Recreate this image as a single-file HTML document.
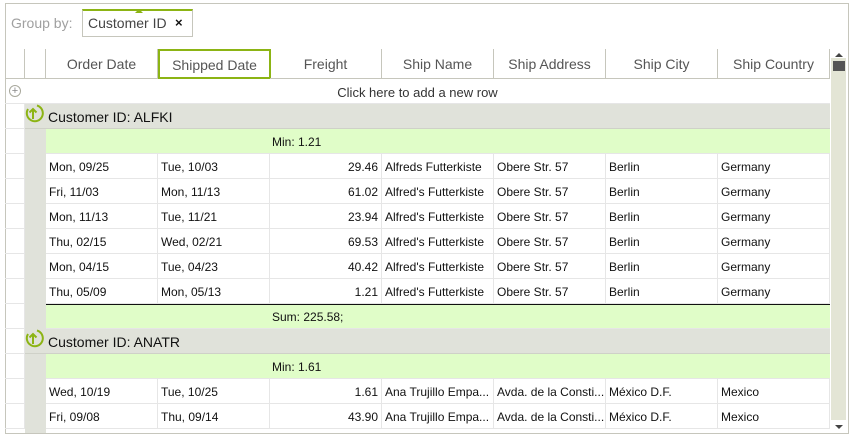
<!DOCTYPE html>
<html><head><meta charset="utf-8"><style>
*{margin:0;padding:0;box-sizing:border-box}
body{width:853px;height:439px;background:#fff;font-family:"Liberation Sans",sans-serif;position:relative;overflow:hidden;color:#111}
.a{position:absolute}
.outer{left:5px;top:3px;width:844px;height:431px;border:1px solid #c6c6bc}
.hd{top:49px;height:30px;border-bottom:1px solid #c6c6bc;border-right:1px solid #c6c6bc;font-size:14px;color:#555;text-align:center;line-height:31px}
.row{left:25px;width:805px;height:25px}
.c{position:absolute;top:0;height:25px;border-right:1px solid #e6e6e6;border-bottom:1px solid #e6e6e6;font-size:12px;line-height:26px;padding:0 3px;white-space:nowrap;overflow:hidden;background:#fff}
.ind{left:5px;width:20px;height:25px;border-bottom:1px solid #e6e6e6;border-right:1px solid #e6e6e6}
.grp{background:#e0e2da;font-size:14px;line-height:27px;padding-left:23px;border-bottom:1px solid #cfd1c8}
.agg{background-color:#e0fdc8;font-size:12px;line-height:26px;border-bottom:1px solid #e6e6e6;height:25px}
</style></head><body>
<div class="a outer"></div>
<div class="a" style="left:11px;top:15px;font-size:14px;color:#a0a0a0">Group by:</div>
<div class="a" style="left:82px;top:9px;width:111px;height:28px;border:1px solid #c6c6bc;border-top:2px solid #8cb414;font-size:14px;color:#444;padding:4px 0 0 5px">Customer ID<span style="position:absolute;left:92px;top:4px;font-size:13px;color:#111;font-weight:bold">×</span><span style="position:absolute;left:52px;top:-2px;width:0;height:0;border-left:4px solid transparent;border-right:4px solid transparent;border-bottom:4px solid #8cb414"></span></div>

<div class="a hd" style="left:5px;width:20px"></div>
<div class="a hd" style="left:25px;width:21px"></div>
<div class="a hd" style="left:46px;width:112px">Order Date</div>
<div class="a hd" style="left:158px;width:113px;border:2px solid #8cb414;line-height:29px">Shipped Date</div>
<div class="a hd" style="left:270px;width:112px">Freight</div>
<div class="a hd" style="left:382px;width:112px">Ship Name</div>
<div class="a hd" style="left:494px;width:112px">Ship Address</div>
<div class="a hd" style="left:606px;width:112px">Ship City</div>
<div class="a hd" style="left:718px;width:112px">Ship Country</div>

<div class="a" style="left:5px;top:79px;width:825px;height:25px;border-bottom:1px solid #e6e6e6;font-size:13px;color:#333;text-align:center;line-height:27px">Click here to add a new row</div>
<div class="a" style="left:9px;top:85px;width:12px;height:12px;border:1px solid #a8a89c;border-radius:50%;font-size:11px;line-height:10px;text-align:center;color:#888">+</div>

<div class="a" style="left:831px;top:58px;width:15px;height:362px;background:#e3e5d5"></div>
<div class="a" style="left:833px;top:61px;width:12px;height:10px;background:#555"></div>
<div class="a" style="left:835px;top:53px;border-left:4px solid transparent;border-right:4px solid transparent;border-bottom:4px solid #444"></div>
<div class="a" style="left:835px;top:425px;border-left:4px solid transparent;border-right:4px solid transparent;border-top:4px solid #444"></div>

<div id="g"></div>
<script>
var L=[46,158,270,382,494,606,718],h='';
function ind(t){return '<div class="a ind" style="top:'+t+'px"></div>';}
function gut(t){return '<div class="a" style="left:25px;top:'+t+'px;width:21px;height:25px;background:#e0e2da"></div>';}
function grp(t,n){h+=ind(t)+'<div class="a row grp" style="top:'+t+'px">Customer ID: '+n+'</div>'+
'<svg class="a" style="left:24px;top:'+(t-1)+'px" width="20" height="22"><path d="M4 6 A8 8 0 1 0 13 2.5" fill="none" stroke="#8cb414" stroke-width="2"/><path d="M9 16V6M5.5 9.5L9 6l3.5 3.5" fill="none" stroke="#8cb414" stroke-width="2"/></svg>';}
function agg(t,s,top){h+=ind(t)+gut(t)+'<div class="a agg" style="background:#e0fdc8;left:46px;width:784px;top:'+t+'px;'+(top?'border-top:1px solid #111;line-height:24px;':'')+'"><span style="position:absolute;left:226px">'+s+'</span></div>';}
function row(t,d){h+=ind(t)+gut(t);for(var i=0;i<7;i++){h+='<div class="c" style="left:'+L[i]+'px;width:112px;top:'+t+'px;'+(i==2?'text-align:right;':'')+'">'+d[i]+'</div>';}}
grp(104,'ALFKI');agg(129,'Min: 1.21');
var r=[['Mon, 09/25','Tue, 10/03','29.46','Alfreds Futterkiste'],['Fri, 11/03','Mon, 11/13','61.02',"Alfred's Futterkiste"],['Mon, 11/13','Tue, 11/21','23.94',"Alfred's Futterkiste"],['Thu, 02/15','Wed, 02/21','69.53',"Alfred's Futterkiste"],['Mon, 04/15','Tue, 04/23','40.42',"Alfred's Futterkiste"],['Thu, 05/09','Mon, 05/13','1.21',"Alfred's Futterkiste"]];
for(var k=0;k<6;k++)row(154+25*k,r[k].concat(['Obere Str. 57','Berlin','Germany']));
agg(304,'Sum: 225.58;',1);
grp(329,'ANATR');agg(354,'Min: 1.61');
row(379,['Wed, 10/19','Tue, 10/25','1.61','Ana Trujillo Empa...','Avda. de la Consti...','México D.F.','Mexico']);
row(404,['Fri, 09/08','Thu, 09/14','43.90','Ana Trujillo Empa...','Avda. de la Consti...','México D.F.','Mexico']);
h+='<div class="a" style="left:5px;top:429px;width:825px;height:4px;overflow:hidden">'+ind(0).replace('left:5px','left:0')+'<div class="a" style="left:20px;top:0;width:21px;height:4px;background:#e0e2da"></div></div>';
document.getElementById('g').innerHTML=h;
</script>
</body></html>
